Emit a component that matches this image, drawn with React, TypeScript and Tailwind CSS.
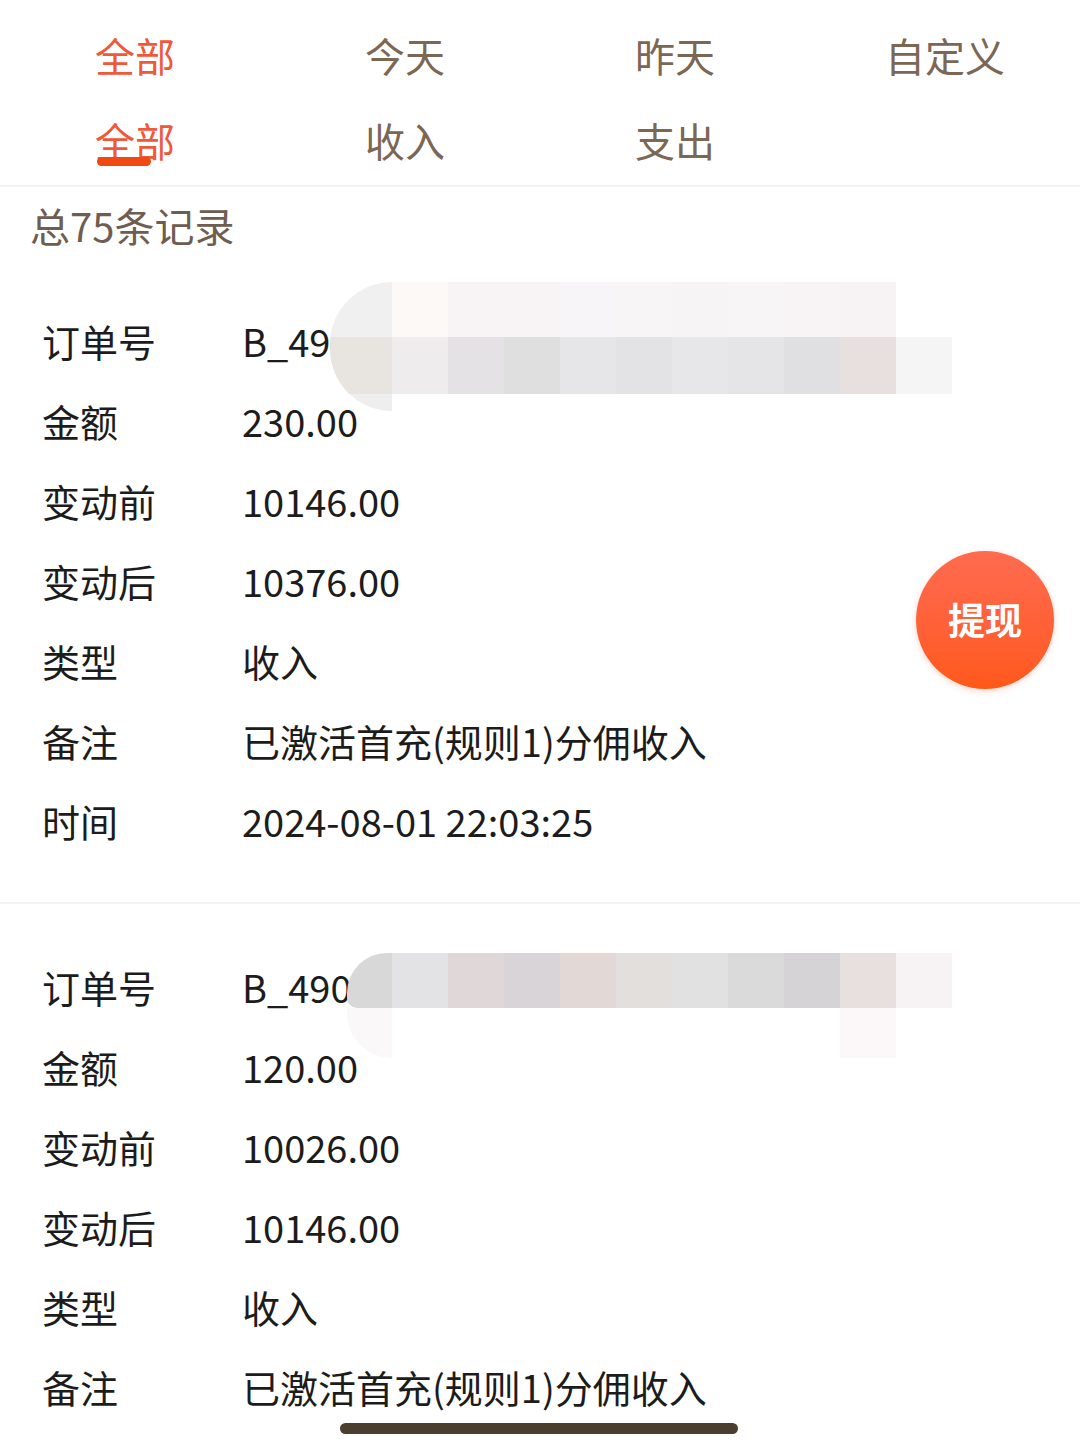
import React from "react";

const FONT = { fontFamily: '"Noto Sans CJK SC", "Noto Sans", sans-serif' };

const topTabs = ["全部", "今天", "昨天", "自定义"];
const typeTabs = ["全部", "收入", "支出", ""];

type Row = { label: string; value: string };

const records: Row[][] = [
  [
    { label: "订单号", value: "B_49" },
    { label: "金额", value: "230.00" },
    { label: "变动前", value: "10146.00" },
    { label: "变动后", value: "10376.00" },
    { label: "类型", value: "收入" },
    { label: "备注", value: "已激活首充(规则1)分佣收入" },
    { label: "时间", value: "2024-08-01 22:03:25" },
  ],
  [
    { label: "订单号", value: "B_490" },
    { label: "金额", value: "120.00" },
    { label: "变动前", value: "10026.00" },
    { label: "变动后", value: "10146.00" },
    { label: "类型", value: "收入" },
    { label: "备注", value: "已激活首充(规则1)分佣收入" },
  ],
];

// pixelated cover over the order number
const mosaicA = {
  top: ["#fdf9f6", "#f8f4f6", "#f8f4f6", "#f7f5f7", "#f8f5f6", "#f7f4f6", "#f8f5f6", "#f8f4f6", "#f7f3f5"],
  bottom: ["#efecee", "#e4e2e4", "#dfdfdf", "#e6e5e7", "#e3e2e4", "#e7e6e8", "#e5e4e6", "#e0dfe1", "#e8e0de", "#f5f5f6"],
};
const mosaicB = ["#e3e3e5", "#e0d8d8", "#d8d4d8", "#e2d8d6", "#e3dfdc", "#e1e1e1", "#dadada", "#d6d3d6", "#e8dfdf", "#f7f3f5"];

function CoverA() {
  return (
    <div className="pointer-events-none absolute left-[288px] top-[-18px] flex">
      <div className="flex h-[129px] w-[62px] flex-col overflow-hidden rounded-l-[62px]">
        <div className="h-[55px] bg-[#f1f0f1]" />
        <div className="h-[57px] bg-[#e8e4e0]" />
        <div className="h-[17px] bg-[#efeeef]" />
      </div>
      <div className="flex flex-col">
        <div className="flex h-[55px]">
          {mosaicA.top.map((c, i) => (
            <div key={i} className="h-full w-[56px]" style={{ backgroundColor: c }} />
          ))}
        </div>
        <div className="flex h-[57px]">
          {mosaicA.bottom.map((c, i) => (
            <div key={i} className="h-full w-[56px]" style={{ backgroundColor: c }} />
          ))}
        </div>
      </div>
    </div>
  );
}

function CoverB() {
  return (
    <div className="pointer-events-none absolute left-[305px] top-[7px] flex">
      <div className="flex flex-col">
        <div className="h-[55px] w-[45px] rounded-tl-[40px] rounded-bl-[10px] bg-[#d8d8d8]" />
        <div className="h-[50px] w-[45px] rounded-bl-[45px] bg-[#fbf8fa]" />
      </div>
      <div className="flex h-[55px]">
        {mosaicB.map((c, i) => (
          <div key={i} className="h-full w-[56px]" style={{ backgroundColor: c }} />
        ))}
      </div>
      <div className="absolute left-[493px] top-[55px] h-[50px] w-[56px] bg-[#fcf8fa]" />
    </div>
  );
}

export default function App() {
  return (
    <div className="relative h-[1448px] w-[1080px] overflow-hidden bg-white" style={FONT}>
      <div className="border-b-2 border-[#f5f1ee] pb-[3px] pt-[12px]">
        {[topTabs, typeTabs].map((row, r) => (
          <div key={r} className="grid h-[85px] grid-cols-4">
            {row.map((t, i) => (
              <div key={i} className="flex items-center justify-center">
                {t && (
                  <span
                    className={
                      "relative text-[40px] leading-none " +
                      (i === 0 ? "text-[#f0583a]" : "text-[#7b6753]")
                    }
                  >
                    {t}
                    {r === 1 && i === 0 && (
                      <span className="absolute left-[2px] top-[37px] h-[9px] w-[54px] rounded-full bg-[#f04a12]" />
                    )}
                  </span>
                )}
              </div>
            ))}
          </div>
        ))}
      </div>

      <div className="px-[30px] pt-[14px] text-[40px] leading-[48px] text-[#6e5d50]">总75条记录</div>

      <div className="pt-[9px]">
        {records.map((rec, ri) => (
          <div
            key={ri}
            className={"px-[42px] py-[42px] " + (ri === 0 ? "border-b-2 border-[#f5f2f0]" : "")}
          >
            {rec.map((row, i) => (
              <div key={i} className="relative flex h-[80px] items-center text-[38px] text-[#1c1c1c]">
                <span className="w-[200px] shrink-0">{row.label}</span>
                <span>{row.value}</span>
                {i === 0 && (ri === 0 ? <CoverA /> : <CoverB />)}
              </div>
            ))}
          </div>
        ))}
      </div>

      <button
        type="button"
        className="absolute left-[916px] top-[551px] flex h-[138px] w-[138px] items-center justify-center rounded-full bg-gradient-to-b from-[#ff6b4f] to-[#ff5818] text-[37px] font-bold text-white shadow-[0_2px_6px_rgba(255,90,40,0.25)]"
      >
        提现
      </button>

      <div className="absolute left-[340px] top-[1423px] h-[11px] w-[398px] rounded-full bg-[#4a3f2f]" />
    </div>
  );
}
